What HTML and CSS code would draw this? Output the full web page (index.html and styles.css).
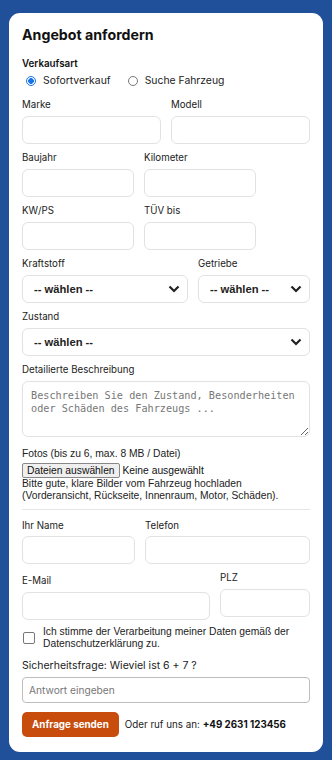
FILE: index.html
```html
<!DOCTYPE html>
<html lang="de">
<head>
    <meta charset="UTF-8">
    <meta name="viewport" content="width=device-width, initial-scale=1.0">
    <title>Angebot anfordern</title>
    <link rel="stylesheet" href="styles.css">
</head>
<body>

<div class="card">
    <h2>Angebot anfordern</h2>

    <div class="label strong">Verkaufsart</div>
    <div class="radios">
        <label class="radio"><span class="dot checked"></span>Sofortverkauf</label>
        <label class="radio"><span class="dot"></span>Suche Fahrzeug</label>
    </div>

    <!-- Fahrzeugdaten -->
    <div class="row">
        <div class="field w-half"><label class="label">Marke</label><input class="input"></div>
        <div class="field w-half"><label class="label">Modell</label><input class="input"></div>
    </div>
    <div class="row">
        <div class="field w-112"><label class="label">Baujahr</label><input class="input"></div>
        <div class="field w-112"><label class="label">Kilometer</label><input class="input"></div>
    </div>
    <div class="row">
        <div class="field w-112"><label class="label">KW/PS</label><input class="input"></div>
        <div class="field w-112"><label class="label">TÜV bis</label><input class="input"></div>
    </div>
    <div class="row">
        <div class="field w-166">
            <label class="label">Kraftstoff</label>
            <div class="select"><span>-- wählen --</span><svg width="12" height="8" viewBox="0 0 12 8"><path d="M1.5 1.5 L6 6 L10.5 1.5" fill="none" stroke="#222" stroke-width="2.2"/></svg></div>
        </div>
        <div class="field grow">
            <label class="label">Getriebe</label>
            <div class="select"><span>-- wählen --</span><svg width="12" height="8" viewBox="0 0 12 8"><path d="M1.5 1.5 L6 6 L10.5 1.5" fill="none" stroke="#222" stroke-width="2.2"/></svg></div>
        </div>
    </div>
    <div class="row">
        <div class="field grow">
            <label class="label">Zustand</label>
            <div class="select"><span>-- wählen --</span><svg width="12" height="8" viewBox="0 0 12 8"><path d="M1.5 1.5 L6 6 L10.5 1.5" fill="none" stroke="#222" stroke-width="2.2"/></svg></div>
        </div>
    </div>
    <div class="row">
        <div class="field grow">
            <label class="label">Detailierte Beschreibung</label>
            <textarea class="textarea" placeholder="Beschreiben Sie den Zustand, Besonderheiten oder Schäden des Fahrzeugs ..."></textarea>
        </div>
    </div>

    <!-- Fotos -->
    <div class="photos">
        <div class="label">Fotos (bis zu 6, max. 8 MB / Datei)</div>
        <div class="file"><span class="file-btn">Dateien auswählen</span> Keine ausgewählt</div>
        <p class="hint">Bitte gute, klare Bilder vom Fahrzeug hochladen (Vorderansicht, Rückseite, Innenraum, Motor, Schäden).</p>
    </div>

    <hr class="sep">

    <!-- Kontakt -->
    <div class="row">
        <div class="field w-113"><label class="label">Ihr Name</label><input class="input"></div>
        <div class="field grow"><label class="label">Telefon</label><input class="input"></div>
    </div>
    <div class="row contact">
        <div class="field w-188"><label class="label">E-Mail</label><input class="input"></div>
        <div class="field grow plz"><label class="label">PLZ</label><input class="input"></div>
    </div>

    <label class="consent">
        <span class="box"></span>
        <span>Ich stimme der Verarbeitung meiner Daten gemäß der Datenschutzerklärung zu.</span>
    </label>

    <div class="question">Sicherheitsfrage: Wieviel ist 6 + 7 ?</div>
    <input class="answer" placeholder="Antwort eingeben">

    <div class="actions">
        <button class="send">Anfrage senden</button>
        <span class="call">Oder ruf uns an: <b>+49 2631 123456</b></span>
    </div>
</div>

</body>
</html>
```

FILE: styles.css
```css
body {
    margin: 0;
    background-color: #21509a;
    font-family: Inter, "Liberation Sans", Arial, sans-serif;
    color: #111;
}
.card {
    width: 288px;
    margin: 13px 0 0 9px;
    padding: 12px 13px 15px 13px;
    background-color: #ffffff;
    border-radius: 11px;
}
h2 {
    margin: 0 0 12px 0;
    font-size: 14.2px;
    line-height: 20px;
    font-weight: 700;
}
.label {
    display: block;
    font-size: 9.7px;
    line-height: 14px;
    color: #222;
    margin-bottom: 3.5px;
}
.label.strong {
    font-size: 9.8px;
    font-weight: 600;
    color: #111;
    margin-bottom: 1px;
}
.radios {
    display: flex;
    gap: 17px;
    padding-left: 4px;
    margin-bottom: 8px;
    font-size: 10.4px;
    line-height: 18px;
}
.radio {
    display: flex;
    align-items: center;
    gap: 5px;
    color: #222;
}
.dot {
    width: 10px;
    height: 10px;
    border: 1px solid #777;
    border-radius: 50%;
    box-sizing: border-box;
    margin-right: 2px;
}
.dot.checked {
    border: 1px solid #1a73e8;
    background: radial-gradient(circle, #1a73e8 0 2.6px, #fff 3.1px);
}
.row {
    display: flex;
    gap: 10px;
    margin-bottom: 7.5px;
}
.field {
    display: flex;
    flex-direction: column;
    min-width: 0;
}
.w-half { flex: 1; }
.w-112 { width: 112px; }
.w-113 { width: 113px; }
.w-166 { width: 166px; }
.w-188 { width: 188px; }
.grow { flex: 1; }
.input {
    box-sizing: border-box;
    width: 100%;
    min-width: 0;
    height: 28px;
    border: 1px solid #e2e2e2;
    border-radius: 6px;
    background: #fff;
    font: inherit;
    outline: none;
}
.select {
    box-sizing: border-box;
    height: 28px;
    border: 1px solid #e2e2e2;
    border-radius: 6px;
    display: flex;
    align-items: center;
    justify-content: space-between;
    padding: 0 7px 0 11px;
    font-family: "Liberation Sans", Arial, sans-serif;
    font-size: 11.2px;
    font-weight: 700;
    color: #222;
}
.select svg {
    display: block;
}
.textarea {
    box-sizing: border-box;
    height: 56px;
    border: 1px solid #e2e2e2;
    border-radius: 6px;
    padding: 7px 8px;
    font-family: "DejaVu Sans Mono", "Liberation Mono", monospace;
    font-size: 10.2px;
    line-height: 13px;
    resize: vertical;
}
.textarea::placeholder {
    color: #777;
}
.photos {
    margin-top: 10px;
    font-family: "Liberation Sans", Arial, sans-serif;
}
.photos .label {
    font-family: "Liberation Sans", Arial, sans-serif;
    font-size: 10.3px;
    margin-bottom: 2px;
}
.file {
    font-size: 10.3px;
    line-height: 15px;
    color: #111;
}
.file-btn {
    display: inline-block;
    padding: 0 4px;
    background: #efefef;
    border: 1px solid #888;
    border-radius: 2px;
    line-height: 13px;
}
.hint {
    margin: 0;
    font-size: 10.3px;
    line-height: 12px;
    color: #222;
}
.sep {
    border: 0;
    border-top: 1px solid #e6e6e6;
    margin: 7px 0 9px 0;
}
.contact {
    margin-top: 10px;
    margin-bottom: 6px;
}
.plz {
    margin-top: -3px;
}
.consent {
    display: flex;
    gap: 8px;
    padding-left: 1px;
    font-family: "Liberation Sans", Arial, sans-serif;
    font-size: 10.3px;
    line-height: 12px;
    color: #222;
    margin-bottom: 9px;
}
.box {
    flex: none;
    width: 10px;
    height: 10px;
    border: 1px solid #777;
    border-radius: 2px;
    margin-top: 6px;
}
.question {
    font-size: 10.5px;
    line-height: 14px;
    color: #222;
    margin-bottom: 4px;
}
.answer {
    box-sizing: border-box;
    width: 100%;
    height: 26px;
    border: 1px solid #bdbdbd;
    border-radius: 4px;
    padding: 0 6px;
    font-family: inherit;
    font-size: 10.2px;
    outline: none;
}
.answer::placeholder {
    color: #777;
}
.actions {
    display: flex;
    align-items: center;
    gap: 6px;
    margin-top: 9px;
}
.send {
    height: 25px;
    padding: 0 10px;
    background-color: #c84c0c;
    color: #fff;
    border: 0;
    border-radius: 5px;
    font-family: inherit;
    font-size: 9.8px;
    font-weight: 700;
}
.call {
    font-size: 9.8px;
    color: #222;
}
.call b {
    color: #111;
}
```
